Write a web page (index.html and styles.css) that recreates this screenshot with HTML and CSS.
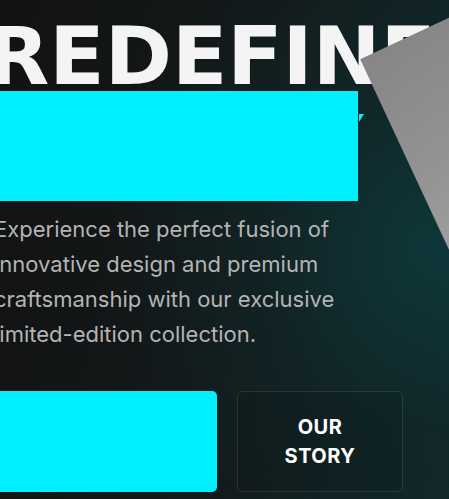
FILE: index.html
```html
<!DOCTYPE html>
<html lang="en">
<head>
<meta charset="utf-8">
<title>Redefine</title>
<link rel="stylesheet" href="styles.css">
</head>
<body>
<section class="hero">
  <div class="hero-content">
    <h1 class="title">
      <span class="title-line">REDEFINE</span>
      <span class="title-accent">REALITY</span>
    </h1>
    <p class="lead">Experience the perfect fusion of innovative design and premium craftsmanship with our exclusive limited-edition collection.</p>
    <div class="actions">
      <a class="btn btn-primary" href="#"></a>
      <a class="btn btn-ghost" href="#">OUR STORY</a>
    </div>
  </div>
  <div class="hero-visual"></div>
</section>
</body>
</html>
```

FILE: styles.css
```css
html, body {
  margin: 0;
  padding: 0;
}
body {
  width: 449px;
  height: 499px;
  overflow: hidden;
  background: #121212;
  font-family: "Inter", "Liberation Sans", sans-serif;
}
.hero {
  position: relative;
  width: 449px;
  height: 499px;
  overflow: hidden;
  background:
    radial-gradient(ellipse 330px 330px at 440px 250px, rgba(14, 56, 58, 0.95) 0%, rgba(16, 40, 42, 0.55) 55%, rgba(18, 18, 18, 0) 100%),
    linear-gradient(100deg, #121212 0%, #131a1b 55%, #12282a 100%);
}
.hero-content {
  display: flex;
  flex-direction: column;
  margin-left: -6px;
  padding-top: 23px;
}
.title {
  margin: 0;
  display: flex;
  flex-direction: column;
  white-space: nowrap;
}
.title-line {
  display: block;
  margin-left: -7px;
  margin-bottom: 1px;
  font-family: "DejaVu Sans", "Inter", sans-serif;
  font-weight: 700;
  font-size: 81px;
  line-height: 67px;
  color: #f4f4f4;
  letter-spacing: 0;
}
.title-accent {
  position: relative;
  display: flex;
  align-items: center;
  width: 364px;
  height: 110px;
  background: #00f0ff;
  color: #00f0ff;
  font-weight: 800;
  font-size: 60px;
  line-height: 1;
}
.title-accent::after {
  content: "";
  position: absolute;
  left: 365px;
  top: 23px;
  width: 5px;
  height: 8px;
  background: #00f0ff;
  clip-path: polygon(0 0, 100% 0, 0 100%);
}
.lead {
  margin: 11px 0 0;
  width: 360px;
  font-size: 22px;
  line-height: 35px;
  color: #b4b4b4;
}
.actions {
  display: flex;
  gap: 20px;
  margin-top: 39px;
}
.btn {
  display: flex;
  align-items: center;
  justify-content: center;
  box-sizing: border-box;
  height: 101px;
  border-radius: 5px;
  text-decoration: none;
}
.btn-primary {
  width: 223px;
  background: #00f0ff;
}
.btn-ghost {
  width: 166px;
  border: 1px solid rgba(255, 255, 255, 0.1);
  background: rgba(0, 0, 0, 0.08);
  color: #ffffff;
  font-size: 20px;
  font-weight: 700;
  line-height: 29px;
  letter-spacing: 0.5px;
  text-align: center;
  padding: 0 40px;
}
.hero-visual {
  position: absolute;
  left: 426px;
  top: -44px;
  width: 400px;
  height: 400px;
  transform: rotate(-25deg);
  background: linear-gradient(170deg, #868686 0%, #949494 30%, #a8a8a8 60%, #b4b4b4 100%);
}
```
